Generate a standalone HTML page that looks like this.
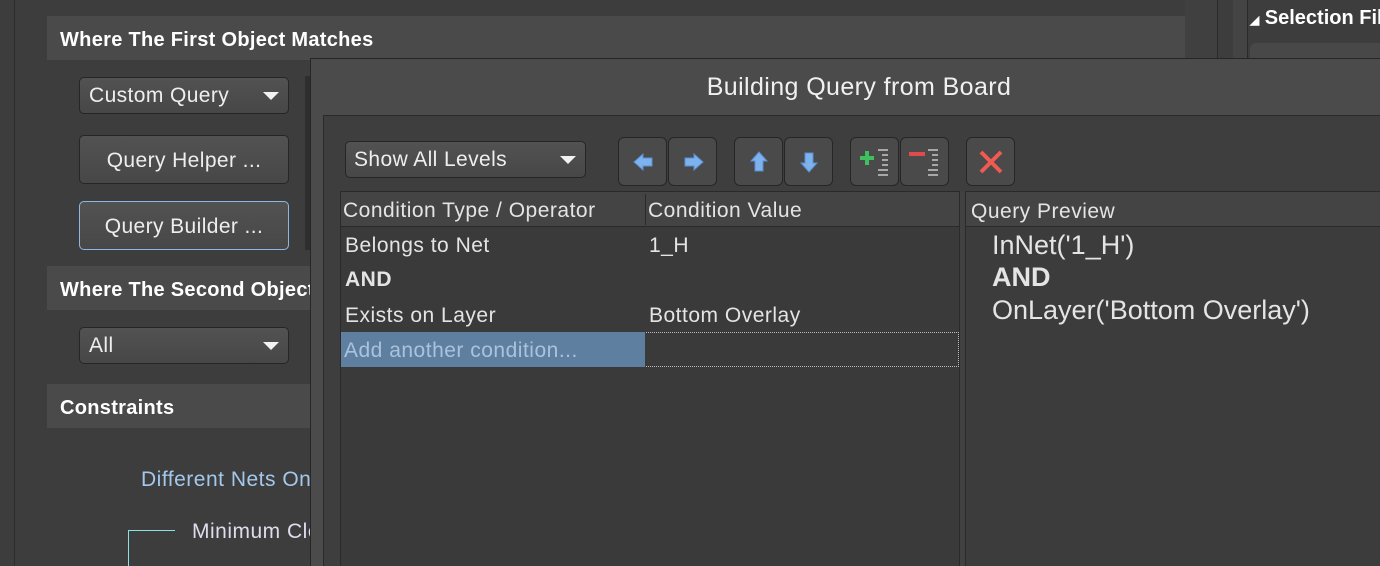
<!DOCTYPE html>
<html style="width:1380px;height:566px;overflow:hidden"><head><meta charset="utf-8"><style>
*{box-sizing:border-box;margin:0;padding:0}
body{width:1380px;height:566px;overflow:hidden;background:#3d3d3d;font-family:"Liberation Sans",sans-serif;position:relative;color:#e8e8e8}
.a{position:absolute}
.hdr{position:absolute;left:47px;width:1138px;height:44px;background:#4a4a4a;font-weight:bold;font-size:20px;color:#fff;padding:13px 0 0 13px;letter-spacing:0.3px}
.btn{position:absolute;border:1px solid #262626;border-radius:5px;background:linear-gradient(#525252,#474747);font-size:21px;color:#eee;letter-spacing:0.4px}
.ib{position:absolute;top:137px;width:49px;height:49px;border:1px solid #262626;border-radius:6px;background:#4a4a4a}
.ib svg{position:absolute;left:0;top:0}
.tri{position:absolute;right:9px;top:14px;width:0;height:0;border-left:8px solid transparent;border-right:8px solid transparent;border-top:8px solid #f2f2f2}
.t{position:absolute;font-size:21px;color:#e4e4e4;white-space:nowrap;letter-spacing:0.5px}
</style></head><body>
<div class="a" style="left:14px;top:0;width:1px;height:566px;background:#2c2c2c"></div>
<div class="a" style="left:1185px;top:0;width:32px;height:566px;background:#404040"></div>
<div class="a" style="left:1217px;top:0;width:1px;height:566px;background:#2a2a2a"></div>
<div class="a" style="left:1233px;top:0;width:14px;height:566px;background:#444"></div>
<div class="a" style="left:1247px;top:0;width:1px;height:566px;background:#2a2a2a"></div>
<div class="a" style="left:1250px;top:7px;font-weight:bold;font-size:20px;color:#fff;white-space:nowrap"><span style="font-size:12px">◢</span> Selection Filter</div>
<div class="a" style="left:1250px;top:43px;width:140px;height:30px;background:#484848;border-radius:6px"></div>

<div class="hdr" style="top:16px">Where The First Object Matches</div>
<div class="btn" style="left:79px;top:77px;width:210px;height:37px;padding:6px 0 0 9px">Custom Query<div class="tri"></div></div>
<div class="btn" style="left:79px;top:135px;width:210px;height:49px;text-align:center;padding-top:13px">Query Helper ...</div>
<div class="btn" style="left:79px;top:201px;width:210px;height:49px;text-align:center;padding-top:13px;border-color:#8db8e2">Query Builder ...</div>
<div class="a" style="left:305px;top:76px;width:5px;height:174px;background:#2e2e2e"></div>
<div class="hdr" style="top:266px">Where The Second Object Matches</div>
<div class="btn" style="left:79px;top:327px;width:210px;height:37px;padding:6px 0 0 9px">All<div class="tri"></div></div>
<div class="hdr" style="top:384px">Constraints</div>
<div class="t" style="left:141px;top:468px;color:#a3c8ec">Different Nets Only</div>
<div class="t" style="left:192px;top:520px;color:#dde">Minimum Clearance</div>
<div class="a" style="left:128px;top:530px;width:47px;height:36px;border-left:1px solid #8fe0e0;border-top:1px solid #8fe0e0"></div>

<div class="a" style="left:310px;top:58px;width:1070px;height:508px;background:#4b4b4b;border-left:1px solid #262626;border-top:1px solid #262626"></div>
<div class="a" style="left:311px;top:73px;width:1096px;text-align:center;font-size:25px;color:#f0f0f0;letter-spacing:0.4px">Building Query from Board</div>
<div class="a" style="left:323px;top:115px;width:1057px;height:451px;background:#3e3e3e;border-left:1px solid #2a2a2a;border-top:1px solid #2a2a2a"></div>
<div class="btn" style="left:345px;top:141px;width:241px;height:37px;padding:6px 0 0 8px">Show All Levels<div class="tri"></div></div>

<div class="ib" style="left:618px"><svg width="49" height="49"><path d="M15 24 L24 16 V20 H33 V28 H24 V32 Z" fill="#7eb2ee" stroke="#5a8fd0" stroke-width="1"/></svg></div>
<div class="ib" style="left:668px"><svg width="49" height="49"><path d="M34 24 L25 16 V20 H16 V28 H25 V32 Z" fill="#7eb2ee" stroke="#5a8fd0" stroke-width="1"/></svg></div>
<div class="ib" style="left:734px"><svg width="49" height="49"><path d="M24 14 L32 23 H28 V33 H20 V23 H16 Z" fill="#7eb2ee" stroke="#5a8fd0" stroke-width="1"/></svg></div>
<div class="ib" style="left:784px"><svg width="49" height="49"><path d="M24 34 L32 25 H28 V15 H20 V25 H16 Z" fill="#7eb2ee" stroke="#5a8fd0" stroke-width="1"/></svg></div>
<div class="ib" style="left:850px"><svg width="49" height="49"><path d="M9 20 H23 M16 13 V27" stroke="#3fbf5f" stroke-width="4"/><path d="M27 12 H37 M31 17 H37 M31 22 H37 M31 27 H37 M27 32 H37 M27 37 H37" stroke="#a8a8a8" stroke-width="2"/></svg></div>
<div class="ib" style="left:900px"><svg width="49" height="49"><path d="M8 16 H24" stroke="#e04a4a" stroke-width="4"/><path d="M27 12 H37 M31 17 H37 M31 22 H37 M31 27 H37 M27 32 H37 M27 37 H37" stroke="#a8a8a8" stroke-width="2"/></svg></div>
<div class="ib" style="left:966px"><svg width="49" height="49"><path d="M14 14 L34 34 M34 14 L14 34" stroke="#f05a50" stroke-width="4"/></svg></div>

<div class="a" style="left:340px;top:191px;width:620px;height:375px;background:#3a3a3a;border:1px solid #2a2a2a;border-bottom:none"></div>
<div class="a" style="left:341px;top:192px;width:618px;height:35px;background:#444;border-bottom:1px solid #2a2a2a"></div>
<div class="a" style="left:645px;top:194px;width:1px;height:31px;background:#2a2a2a"></div>
<div class="t" style="left:343px;top:199px">Condition Type / Operator</div>
<div class="t" style="left:648px;top:199px">Condition Value</div>
<div class="t" style="left:345px;top:234px">Belongs to Net</div>
<div class="t" style="left:649px;top:234px">1_H</div>
<div class="t" style="left:345px;top:268px;font-weight:bold">AND</div>
<div class="t" style="left:345px;top:304px">Exists on Layer</div>
<div class="t" style="left:649px;top:304px">Bottom Overlay</div>
<div class="a" style="left:341px;top:332px;width:618px;height:35px;border:1px dotted #bbb"></div>
<div class="a" style="left:341px;top:332px;width:304px;height:35px;background:#5f7fa0"></div>
<div class="t" style="left:344px;top:339px;color:#a9c3dd">Add another condition...</div>
<div class="a" style="left:960px;top:191px;width:6px;height:375px;background:#414141"></div>

<div class="a" style="left:965px;top:191px;width:415px;height:375px;background:#3c3c3c;border-left:1px solid #2a2a2a;border-top:1px solid #2a2a2a"></div>
<div class="a" style="left:966px;top:192px;width:414px;height:35px;background:#444;border-bottom:1px solid #2a2a2a"></div>
<div class="t" style="left:971px;top:200px">Query Preview</div>
<div class="t" style="left:992px;top:230px;font-size:27px;letter-spacing:0">InNet('1_H')</div>
<div class="t" style="left:992px;top:262px;font-size:27px;font-weight:bold;letter-spacing:0">AND</div>
<div class="t" style="left:992px;top:295px;font-size:27px;letter-spacing:0">OnLayer('Bottom Overlay')</div>
</body></html>
